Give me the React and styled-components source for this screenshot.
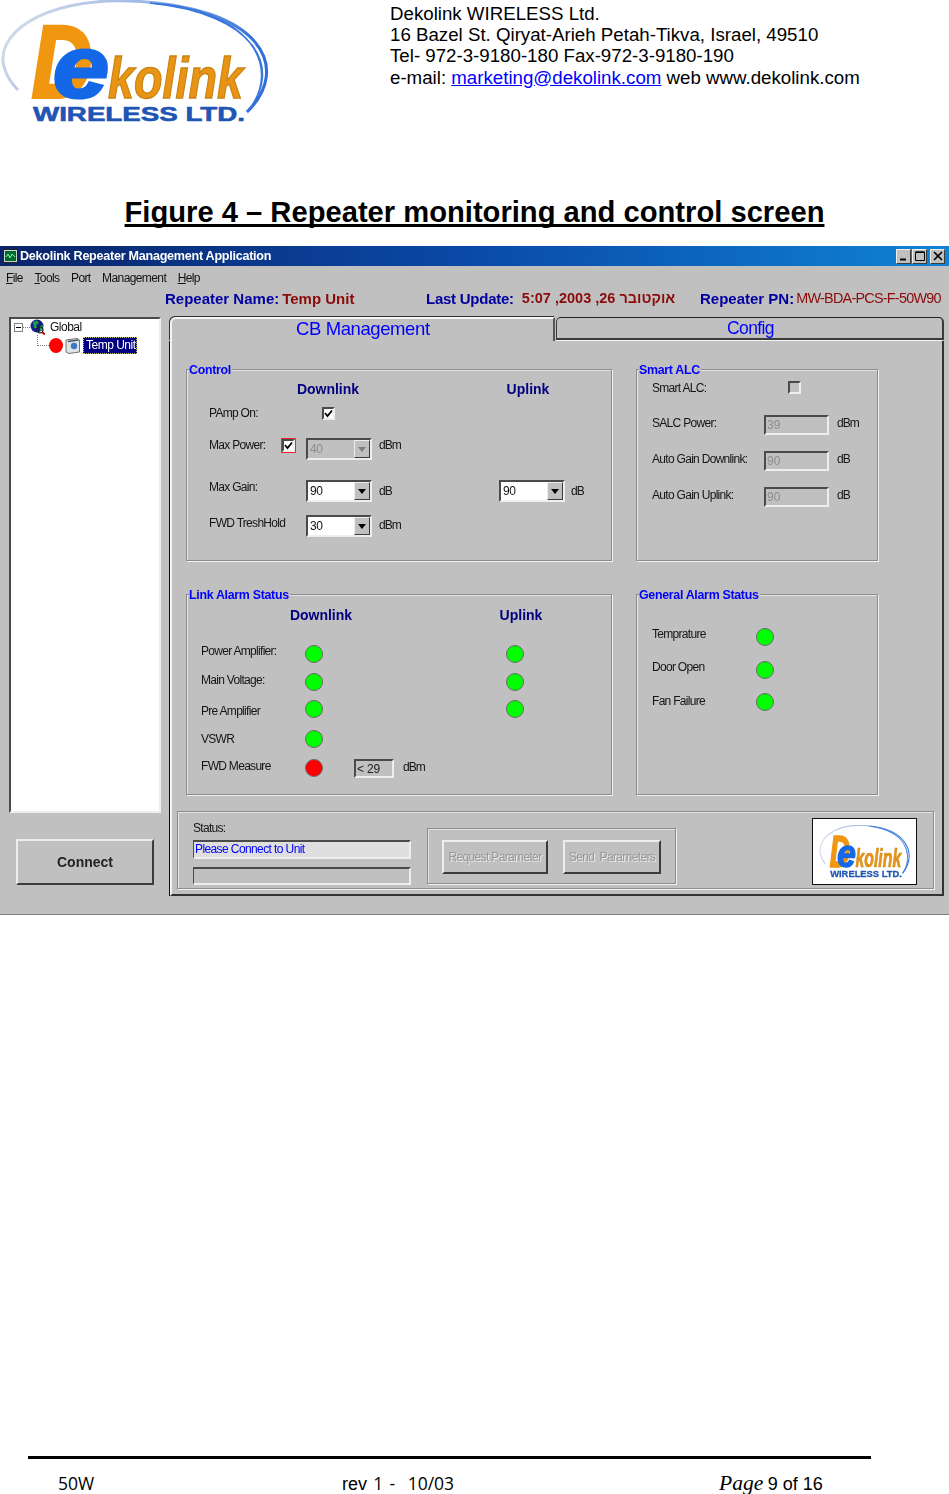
import React from 'react';
import styled, { createGlobalStyle, css } from 'styled-components';

const GlobalStyle = createGlobalStyle`
    html, body {
        margin: 0;
        padding: 0;
        background: #fff;
        font-family: "Liberation Sans", Arial, sans-serif;
    }
`

const sunken = css`
    box-sizing: border-box;
    border: 2px solid;
    border-color: #4a4a4a #eeeeee #eeeeee #4a4a4a;
`

const raised = css`
    box-sizing: border-box;
    border: 2px solid;
    border-color: #eeeeee #3c3c3c #3c3c3c #eeeeee;
`

const Page = styled.div`
    width: 949px;
    height: 1494px;
    overflow: hidden;
    display: flex;
    flex-direction: column;
    background: #fff;
`

const Letterhead = styled.header`
    height: 135px;
    display: flex;
    align-items: flex-start;
`

const Address = styled.div`
    margin-left: 118px;
    padding-top: 3px;
    font-size: 18.7px;
    line-height: 21.2px;
    color: #000;
    white-space: nowrap;

    a {
        color: #0000ff;
        text-decoration: underline;
    }
`

const Title = styled.h1`
    margin: 60px 0 17px;
    font-size: 29.17px;
    line-height: 34px;
    font-weight: bold;
    text-align: center;
    color: #000;
    text-decoration: underline;
    text-decoration-thickness: 3px;
    text-underline-offset: 2px;
    text-decoration-skip-ink: none;
`

const Window = styled.section`
    height: 669px;
    flex: none;
    box-sizing: border-box;
    display: flex;
    flex-direction: column;
    background: #c0c0c0;
    border-bottom: 1px solid #808080;
    filter: blur(0.35px);
`

const TitleBar = styled.div`
    height: 20px;
    flex: none;
    display: flex;
    align-items: center;
    padding: 0 4px 0 3px;
    background: linear-gradient(90deg, #0a246a 0%, #0a4aa8 50%, #0f84d4 100%);
    color: #fff;
    font-size: 12.6px;
    letter-spacing: -0.27px;
    font-weight: bold;
    white-space: nowrap;
`

const AppIcon = styled.svg`
    width: 15px;
    height: 14px;
    margin-right: 2px;
`

const CaptionButtons = styled.div`
    margin-left: auto;
    display: flex;
    align-items: center;
`

const CaptionButton = styled.div`
    ${raised}
    width: 15px;
    height: 15px;
    margin-left: ${p => p.$gap || 0}px;
    background: #c0c0c0;
    display: flex;
    align-items: center;
    justify-content: center;
    border-width: 1px;

    svg { display: block; }
`

const MenuBar = styled.nav`
    height: 20px;
    flex: none;
    margin-top: 2px;
    padding-left: 6px;
    display: flex;
    align-items: center;
    gap: 11.5px;
    font-size: 12px;
    letter-spacing: -0.6px;
    color: #111;

    u { text-decoration: underline; }
`

const InfoRow = styled.div`
    height: 20px;
    flex: none;
    padding-left: 165px;
    display: grid;
    grid-template-columns: 261px 274px 1fr;
    align-items: center;
    font-size: 15px;
    font-weight: bold;
    white-space: nowrap;
`

const InfoCell = styled.div`
    display: flex;
    align-items: center;
`

const InfoName = styled.span`
    color: #0000a0;
    margin-right: ${p => p.$gap || 2}px;
    letter-spacing: ${p => p.$tight || 0}px;
`

const InfoValue = styled.span`
    color: #8b0a0a;
    font-weight: ${p => (p.$thin ? 'normal' : 'bold')};
    letter-spacing: ${p => (p.$thin ? '-0.75px' : '0')};
    font-size: ${p => (p.$thin ? '14.4px' : p.$small ? '14.5px' : '15px')};
`

const Body = styled.div`
    margin: 9px 0 0 9px;
    display: flex;
    align-items: flex-start;
    gap: 9px;
`

const Side = styled.aside`
    width: 152px;
    flex: none;
`

const Tree = styled.div`
    ${sunken}
    height: 496px;
    background: #fff;
    font-size: 12px;
    letter-spacing: -0.5px;
    color: #111;
`

const TreeRow = styled.div`
    display: flex;
    align-items: center;
    height: ${p => p.$h}px;
    margin-left: ${p => p.$left}px;
    margin-top: ${p => p.$top || 0}px;
`

const ExpandBox = styled.div`
    width: 9px;
    height: 9px;
    box-sizing: border-box;
    border: 1px solid #808080;
    position: relative;

    &::after {
        content: "";
        position: absolute;
        left: 1px;
        right: 1px;
        top: 3px;
        height: 1px;
        background: #000;
    }
`

const DotLine = styled.div`
    width: 7px;
    border-top: 1px dotted #808080;
`

const Elbow = styled.div`
    width: 12px;
    height: 11px;
    box-sizing: border-box;
    margin-top: -2px;
    align-self: flex-start;
    border-left: 1px dotted #808080;
    border-bottom: 1px dotted #808080;
`

const TreeIcon = styled.svg`
    width: 15px;
    height: 16px;
    flex: none;
    margin-right: ${p => p.$gap}px;
`

const TreeDot = styled.div`
    width: 14px;
    height: 15px;
    border-radius: 50%;
    background: #ff0000;
    margin-right: 2px;
    flex: none;
`

const TreeSelected = styled.div`
    background: #000080;
    color: #fff;
    width: 54px;
    height: 17px;
    box-sizing: border-box;
    line-height: 15px;
    padding-left: 2px;
    border: 1px dotted #c8c060;
    white-space: nowrap;
`

const ConnectButton = styled.button`
    ${raised}
    display: block;
    width: 138px;
    height: 46px;
    margin: 26px 0 0 7px;
    padding: 0;
    background: #c0c0c0;
    font-family: inherit;
    font-size: 14px;
    font-weight: bold;
    color: #222;
`

const TabPanel = styled.main`
    width: 774px;
    flex: none;
`

const TabStrip = styled.div`
    height: 24px;
    display: flex;
    align-items: flex-start;
`

const ActiveTab = styled.div`
    width: 385px;
    height: 24px;
    box-sizing: border-box;
    border-top: 2px solid #f4f4f4;
    border-left: 2px solid #f4f4f4;
    border-right: 2px solid #555;
    border-top-left-radius: 6px;
    box-shadow: -1px -1px 0 #333;
    padding-left: 124px;
    color: #0000ff;
    font-size: 18.5px;
    letter-spacing: -0.4px;
    line-height: 20px;
    white-space: nowrap;
`

const IdleTab = styled.div`
    width: 388px;
    height: 23px;
    margin-left: 1px;
    box-sizing: border-box;
    border: 2px solid #3a3a3a;
    border-left-width: 1px;
    border-top-width: 1px;
    border-radius: 5px 5px 0 0;
    border-top-color: #222;
    padding-left: 170px;
    color: #0000ff;
    font-size: 17.5px;
    letter-spacing: -0.6px;
    line-height: 20px;
    white-space: nowrap;
`

const TabBody = styled.div`
    height: 555px;
    box-sizing: border-box;
    border-left: 2px solid #f4f4f4;
    border-right: 2px solid #333;
    border-bottom: 2px solid #333;
    box-shadow: -1px 0 0 #111;
    padding-top: 28px;
    position: relative;

    &::before {
        content: "";
        position: absolute;
        left: 384px;
        right: 0;
        top: -1px;
        height: 1px;
        background: #f4f4f4;
    }
`

const Groups = styled.div`
    margin-left: 14px;
    display: grid;
    grid-template-columns: 426px 242px;
    grid-template-rows: 192px 201px;
    column-gap: 24px;
    row-gap: 33px;
`

const GroupBox = styled.div`
    position: relative;
    box-sizing: border-box;
    border: 1px solid #8c8c8c;
    box-shadow: 1px 1px 0 #f2f2f2, inset 1px 1px 0 #e4e4e4;
    padding: ${p => p.$pad || '0'};
`

const Legend = styled.div`
    position: absolute;
    left: 2px;
    top: -7px;
    padding-right: 1px;
    background: #c0c0c0;
    color: #0000ff;
    font-size: 12.4px;
    font-weight: bold;
    letter-spacing: -0.3px;
    line-height: 15px;
    white-space: nowrap;
`

const Heads = styled.div`
    display: flex;
    gap: 80px;
    height: 18px;
    padding-left: ${p => p.$left}px;
`

const Head = styled.div`
    width: 120px;
    text-align: center;
    color: #000080;
    font-size: 14px;
    font-weight: bold;
    line-height: 18px;
`

const Row = styled.div`
    display: grid;
    grid-template-columns: ${p => p.$cols};
    height: ${p => p.$h}px;
    align-items: center;
    margin-top: ${p => p.$top || 0}px;
`

const Label = styled.div`
    grid-column: 1;
    box-sizing: border-box;
    padding-bottom: ${p => p.$up || 0}px;
    padding-top: ${p => p.$down || 0}px;
    font-size: 12px;
    letter-spacing: -0.7px;
    color: #151515;
    white-space: nowrap;
`

const Unit = styled.div`
    grid-column: ${p => p.$col};
    box-sizing: border-box;
    padding-left: ${p => p.$left}px;
    padding-bottom: ${p => p.$up || 0}px;
    font-size: 12px;
    letter-spacing: -1px;
    color: #151515;
`

const Check = styled.div`
    ${sunken}
    grid-column: ${p => p.$col};
    width: 13px;
    height: 13px;
    margin-left: ${p => p.$left || 0}px;
    margin-bottom: ${p => p.$up || 0}px;
    background: ${p => (p.$checked ? '#fff' : '#c0c0c0')};
    position: relative;
    outline: ${p => (p.$focus ? '1px solid #ff2020' : 'none')};

    svg {
        position: absolute;
        left: 0;
        top: 0;
    }
`

const Combo = styled.div`
    ${sunken}
    grid-column: ${p => p.$col};
    width: 66px;
    height: 22px;
    display: flex;
    align-items: center;
    justify-content: space-between;
    background: ${p => (p.$disabled ? '#c0c0c0' : '#fff')};
    color: ${p => (p.$disabled ? '#8e8e8e' : '#111')};
    font-size: 12px;
    letter-spacing: -0.3px;
    padding-left: 2px;
`

const ComboArrow = styled.div`
    ${raised}
    border-width: 1px;
    width: 16px;
    height: 18px;
    background: #c0c0c0;
    display: flex;
    align-items: center;
    justify-content: center;

    &::after {
        content: "";
        border-left: 4px solid transparent;
        border-right: 4px solid transparent;
        border-top: 5px solid ${p => (p.$disabled ? '#808080' : '#000')};
    }
`

const ReadField = styled.div`
    ${sunken}
    grid-column: 2;
    width: 65px;
    height: 20px;
    padding-left: 1px;
    color: #8e8e8e;
    font-size: 12px;
    line-height: 17px;
`

const Led = styled.div`
    grid-column: ${p => p.$col || 2};
    width: 18px;
    height: 18px;
    box-sizing: border-box;
    border-radius: 50%;
    border: 1px solid #6a6a6a;
    background: ${p => (p.$off ? '#ff0000' : '#00ff00')};
`

const MeasureCell = styled.div`
    grid-column: 3;
    display: flex;
    align-items: center;
    padding-left: 31px;
`

const MeasureBox = styled.div`
    ${sunken}
    width: 40px;
    height: 19px;
    padding-left: 1px;
    color: #222;
    font-size: 12px;
    letter-spacing: -0.2px;
    line-height: 16px;
    white-space: nowrap;
`

const MeasureUnit = styled.div`
    margin-left: 9px;
    padding-bottom: 3px;
    font-size: 12px;
    letter-spacing: -1px;
    color: #151515;
`

const StatusGroup = styled.div`
    width: 757px;
    height: 78px;
    margin: 16px 0 0 5px;
    box-sizing: border-box;
    border: 1px solid #8c8c8c;
    box-shadow: 1px 1px 0 #f2f2f2, inset 1px 1px 0 #e4e4e4;
    display: flex;
    align-items: flex-start;
    padding-left: 15px;
`

const StatusColumn = styled.div`
    width: 218px;
    flex: none;
    padding-top: 9px;
`

const StatusLabel = styled.div`
    height: 14px;
    font-size: 12px;
    line-height: 14px;
    letter-spacing: -0.7px;
    color: #151515;
`

const StatusField = styled.div`
    ${sunken}
    margin-top: 5px;
    height: 19px;
    padding-left: 1px;
    background: #dfdfdf;
    color: #0000ff;
    font-size: 12px;
    letter-spacing: -0.6px;
    line-height: 15px;
    border-width: 2px 2px 2px 1px;
`

const ProgressField = styled.div`
    ${sunken}
    margin-top: 8px;
    height: 18px;
    border-width: 2px 2px 2px 1px;
`

const ActionGroup = styled.div`
    width: 249px;
    height: 56px;
    margin: 16px 0 0 16px;
    box-sizing: border-box;
    border: 1px solid #8c8c8c;
    box-shadow: 1px 1px 0 #f2f2f2, inset 1px 1px 0 #e4e4e4;
    display: flex;
    gap: 15px;
    padding: 11px 0 0 14px;
`

const ActionButton = styled.button`
    ${raised}
    width: ${p => p.$w}px;
    height: 34px;
    padding: 0;
    background: #c0c0c0;
    font-family: inherit;
    font-size: 12px;
    letter-spacing: -0.65px;
    color: #979797;
    text-shadow: 1px 1px 0 #ececec;
    white-space: nowrap;
`

const LogoBox = styled.div`
    width: 105px;
    height: 67px;
    margin: 6px 16px 0 auto;
    box-sizing: border-box;
    border: 1px solid #111;
    background: #fff;
    display: flex;
    align-items: center;
    justify-content: center;
`

const Footer = styled.footer`
    margin-top: auto;
    height: 38px;
    flex: none;
`

const FooterRule = styled.div`
    width: 843px;
    height: 3px;
    margin-left: 28px;
    background: #000;
`

const FooterText = styled.div`
    padding: 13px 0 0 58px;
    display: grid;
    grid-template-columns: 284px 377px auto;
    font-family: "Open Sans", sans-serif;
    font-size: 17.5px;
    line-height: 22px;
    color: #000;
    white-space: nowrap;

    b {
        font-family: "Liberation Sans", Arial, sans-serif;
        font-size: 18px;
        font-weight: normal;
    }

    em {
        font-family: "Liberation Serif", serif;
        font-size: 21.5px;
    }
`

const Revision = styled.span`
    word-spacing: 1.7px;
`

const Logo = ({ id, width, height }) =>
    <svg width={width} height={height} viewBox="0 0 272 125" preserveAspectRatio="none" style={{ flex: 'none', display: 'block' }}>
        <defs>
            <linearGradient id={id} x1="0" y1="0" x2="1" y2="0.3">
                <stop offset="0" stopColor="#dde2ea" />
                <stop offset="0.45" stopColor="#a4bce6" />
                <stop offset="1" stopColor="#2f6ed8" />
            </linearGradient>
        </defs>
        <path d="M247 112 C 292 68 262 6 130 1 C 40 -2 -8 36 5 70 C 8 78 12 84 18 90" fill="none" stroke={`url(#${id})`} strokeWidth="3" />
        <path d="M247 112 C 284 68 256 14 150 3 C 250 8 284 68 247 112 Z" fill="#3a78dc" stroke="#3a78dc" strokeWidth="1.5" />
        <text x="32" y="97" fontFamily="Liberation Sans" fontWeight="bold" fontStyle="italic" fontSize="102" fill="#f0960f" stroke="#f0960f" strokeWidth="4" textLength="60" lengthAdjust="spacingAndGlyphs">D</text>
        <text x="53" y="97" fontFamily="Liberation Sans" fontWeight="bold" fontStyle="italic" fontSize="88" fill="#1468e8" stroke="#1468e8" strokeWidth="3" textLength="56" lengthAdjust="spacingAndGlyphs">e</text>
        <text x="108" y="98" fontFamily="Liberation Sans" fontWeight="bold" fontStyle="italic" fontSize="58" fill="#ea9416" stroke="#c98412" strokeWidth="1.4" textLength="135" lengthAdjust="spacingAndGlyphs">kolink</text>
        <text x="33" y="121" fontFamily="Liberation Sans" fontWeight="bold" fontSize="21" fill="#1f55b4" stroke="#1f55b4" strokeWidth="0.6" textLength="212" lengthAdjust="spacingAndGlyphs">WIRELESS LTD.</text>
    </svg>

const Tick = () =>
    <svg width="9" height="9" viewBox="0 0 9 9">
        <path d="M1 4 L3.5 7 L8 1.5" fill="none" stroke="#000" strokeWidth="1.8" />
    </svg>

const Globe = () =>
    <TreeIcon $gap={5} viewBox="0 0 15 16">
        <circle cx="7" cy="7" r="6.5" fill="#16208a" />
        <path d="M3 3 L7 1.5 L9 4 L6 6 L7 9 L4 9 Z M10 7 L13 6 L12 11 L10 12 Z" fill="#20a040" />
        <circle cx="10" cy="11" r="3" fill="none" stroke="#202020" strokeWidth="1.2" />
        <path d="M12 13 L15 15.5" stroke="#b01010" strokeWidth="2" />
    </TreeIcon>

const UnitIcon = () =>
    <TreeIcon $gap={3} viewBox="0 0 15 16">
        <path d="M1 2 L12 0.5 L14.5 2 L14.5 14 L4 15.5 L1 14 Z" fill="#dfe4e6" stroke="#707478" strokeWidth="1" />
        <circle cx="9" cy="8" r="3.2" fill="#3d78c8" />
        <path d="M3 3.5 L13.5 2" stroke="#50565c" strokeWidth="1.5" />
    </TreeIcon>

const ComboBox = ({ value, col, disabled }) =>
    <Combo $col={col} $disabled={disabled}>
        {value}
        <ComboArrow $disabled={disabled} />
    </Combo>

const CONTROL_COLS = '73px 24px 66px 127px 66px 1fr'
const ALC_COLS = '112px 65px 1fr'
const LINK_COLS = '104px 18px 183px 18px'
const GENERAL_COLS = '104px 18px'

const App = () =>
    <Page>
        <GlobalStyle />
        <Letterhead>
            <Logo id="ring-big" width={272} height={125} />
            <Address>
                Dekolink WIRELESS Ltd.<br />
                16 Bazel St. Qiryat-Arieh Petah-Tikva, Israel, 49510<br />
                Tel- 972-3-9180-180 Fax-972-3-9180-190<br />
                e-mail: <a href="#mail">marketing@dekolink.com</a> web www.dekolink.com
            </Address>
        </Letterhead>
        <Title>Figure 4 – Repeater monitoring and control screen</Title>

        <Window>
            <TitleBar>
                <AppIcon viewBox="0 0 15 14">
                    <rect x="0.5" y="0.5" width="14" height="13" fill="#c8d8c8" stroke="#222" />
                    <rect x="2" y="2" width="11" height="10" fill="#063" />
                    <path d="M3 8 L5 5 L7 9 L9 5 L12 8" fill="none" stroke="#8f8" />
                </AppIcon>
                Dekolink Repeater Management Application
                <CaptionButtons>
                    <CaptionButton>
                        <svg width="9" height="9" viewBox="0 0 9 9"><rect x="1" y="6.5" width="6" height="2" fill="#000" /></svg>
                    </CaptionButton>
                    <CaptionButton $gap={1}>
                        <svg width="10" height="10" viewBox="0 0 10 10"><path d="M0.5 1.5 H9.5 V9.5 H0.5 Z M0.5 0.8 H9.5" fill="none" stroke="#000" /></svg>
                    </CaptionButton>
                    <CaptionButton $gap={3}>
                        <svg width="10" height="10" viewBox="0 0 10 10"><path d="M1 1 L9 9 M9 1 L1 9" stroke="#000" strokeWidth="1.6" /></svg>
                    </CaptionButton>
                </CaptionButtons>
            </TitleBar>

            <MenuBar>
                <span><u>F</u>ile</span>
                <span><u>T</u>ools</span>
                <span>Port</span>
                <span>Management</span>
                <span><u>H</u>elp</span>
            </MenuBar>

            <InfoRow>
                <InfoCell>
                    <InfoName $gap={3}>Repeater Name:</InfoName>
                    <InfoValue>Temp Unit</InfoValue>
                </InfoCell>
                <InfoCell>
                    <InfoName $gap={8} $tight={-0.25}>Last Update:</InfoName>
                    <InfoValue $small dir="rtl">אוקטובר 26, 2003, 5:07</InfoValue>
                </InfoCell>
                <InfoCell>
                    <InfoName>Repeater PN:</InfoName>
                    <InfoValue $thin>MW-BDA-PCS-F-50W90</InfoValue>
                </InfoCell>
            </InfoRow>

            <Body>
                <Side>
                    <Tree>
                        <TreeRow $h={16} $left={3}>
                            <ExpandBox />
                            <DotLine />
                            <Globe />
                            Global
                        </TreeRow>
                        <TreeRow $h={17} $left={26} $top={2}>
                            <Elbow />
                            <TreeDot />
                            <UnitIcon />
                            <TreeSelected>Temp Unit</TreeSelected>
                        </TreeRow>
                    </Tree>
                    <ConnectButton>Connect</ConnectButton>
                </Side>

                <TabPanel>
                    <TabStrip>
                        <ActiveTab>CB Management</ActiveTab>
                        <IdleTab>Config</IdleTab>
                    </TabStrip>
                    <TabBody>
                        <Groups>
                            <GroupBox $pad="10px 0 0 22px">
                                <Legend>Control</Legend>
                                <Heads $left={59}>
                                    <Head>Downlink</Head>
                                    <Head>Uplink</Head>
                                </Heads>
                                <Row $cols={CONTROL_COLS} $h={30}>
                                    <Label>PAmp On:</Label>
                                    <Check $col={3} $left={16} $checked><Tick /></Check>
                                </Row>
                                <Row $cols={CONTROL_COLS} $h={42}>
                                    <Label $up={8}>Max Power:</Label>
                                    <Check $col={2} $up={8} $checked $focus><Tick /></Check>
                                    <ComboBox col={3} value="40" disabled />
                                    <Unit $col={4} $left={7} $up={8}>dBm</Unit>
                                </Row>
                                <Row $cols={CONTROL_COLS} $h={42}>
                                    <Label $up={8}>Max Gain:</Label>
                                    <ComboBox col={3} value="90" />
                                    <Unit $col={4} $left={7}>dB</Unit>
                                    <ComboBox col={5} value="90" />
                                    <Unit $col={6} $left={6}>dB</Unit>
                                </Row>
                                <Row $cols={CONTROL_COLS} $h={28}>
                                    <Label $up={6}>FWD TreshHold</Label>
                                    <ComboBox col={3} value="30" />
                                    <Unit $col={4} $left={7} $up={2}>dBm</Unit>
                                </Row>
                            </GroupBox>

                            <GroupBox $pad="0 0 0 15px">
                                <Legend>Smart ALC</Legend>
                                <Row $cols={ALC_COLS} $h={35}>
                                    <Label>Smart ALC:</Label>
                                    <Check $col={2} $left={24} />
                                </Row>
                                <Row $cols={ALC_COLS} $h={40}>
                                    <Label $up={4}>SALC Power:</Label>
                                    <ReadField>39</ReadField>
                                    <Unit $col={3} $left={8} $up={4}>dBm</Unit>
                                </Row>
                                <Row $cols={ALC_COLS} $h={32}>
                                    <Label $up={4}>Auto Gain Downlink:</Label>
                                    <ReadField>90</ReadField>
                                    <Unit $col={3} $left={8} $up={4}>dB</Unit>
                                </Row>
                                <Row $cols={ALC_COLS} $h={40}>
                                    <Label $up={4}>Auto Gain Uplink:</Label>
                                    <ReadField>90</ReadField>
                                    <Unit $col={3} $left={8} $up={4}>dB</Unit>
                                </Row>
                            </GroupBox>

                            <GroupBox $pad="11px 0 0 14px">
                                <Legend>Link Alarm Status</Legend>
                                <Heads $left={60}>
                                    <Head>Downlink</Head>
                                    <Head>Uplink</Head>
                                </Heads>
                                <Row $cols={LINK_COLS} $h={28} $top={16}>
                                    <Label $up={7}>Power Amplifier:</Label>
                                    <Led />
                                    <Led $col={4} />
                                </Row>
                                <Row $cols={LINK_COLS} $h={28}>
                                    <Label $up={4}>Main Voltage:</Label>
                                    <Led />
                                    <Led $col={4} />
                                </Row>
                                <Row $cols={LINK_COLS} $h={26}>
                                    <Label $down={4}>Pre Amplifier</Label>
                                    <Led />
                                    <Led $col={4} />
                                </Row>
                                <Row $cols={LINK_COLS} $h={34}>
                                    <Label $up={1}>VSWR</Label>
                                    <Led />
                                </Row>
                                <Row $cols={LINK_COLS} $h={24}>
                                    <Label $up={4}>FWD Measure</Label>
                                    <Led $off />
                                    <MeasureCell>
                                        <MeasureBox>&lt; 29</MeasureBox>
                                        <MeasureUnit>dBm</MeasureUnit>
                                    </MeasureCell>
                                </Row>
                            </GroupBox>

                            <GroupBox $pad="25px 0 0 15px">
                                <Legend>General Alarm Status</Legend>
                                <Row $cols={GENERAL_COLS} $h={34}>
                                    <Label $up={6}>Temprature</Label>
                                    <Led />
                                </Row>
                                <Row $cols={GENERAL_COLS} $h={32}>
                                    <Label $up={6}>Door Open</Label>
                                    <Led />
                                </Row>
                                <Row $cols={GENERAL_COLS} $h={32}>
                                    <Label $up={2}>Fan Failure</Label>
                                    <Led />
                                </Row>
                            </GroupBox>
                        </Groups>

                        <StatusGroup>
                            <StatusColumn>
                                <StatusLabel>Status:</StatusLabel>
                                <StatusField>Please Connect to Unit</StatusField>
                                <ProgressField />
                            </StatusColumn>
                            <ActionGroup>
                                <ActionButton $w={106}>Request Parameter</ActionButton>
                                <ActionButton $w={98}>Send&nbsp; Parameters</ActionButton>
                            </ActionGroup>
                            <LogoBox>
                                <Logo id="ring-small" width={92} height={54} />
                            </LogoBox>
                        </StatusGroup>
                    </TabBody>
                </TabPanel>
            </Body>
        </Window>

        <Footer>
            <FooterRule />
            <FooterText>
                <span>50W</span>
                <Revision><b>rev</b> 1 -&nbsp; 10/03</Revision>
                <span><em>Page</em> <b>9 of 16</b></span>
            </FooterText>
        </Footer>
    </Page>

export default App
